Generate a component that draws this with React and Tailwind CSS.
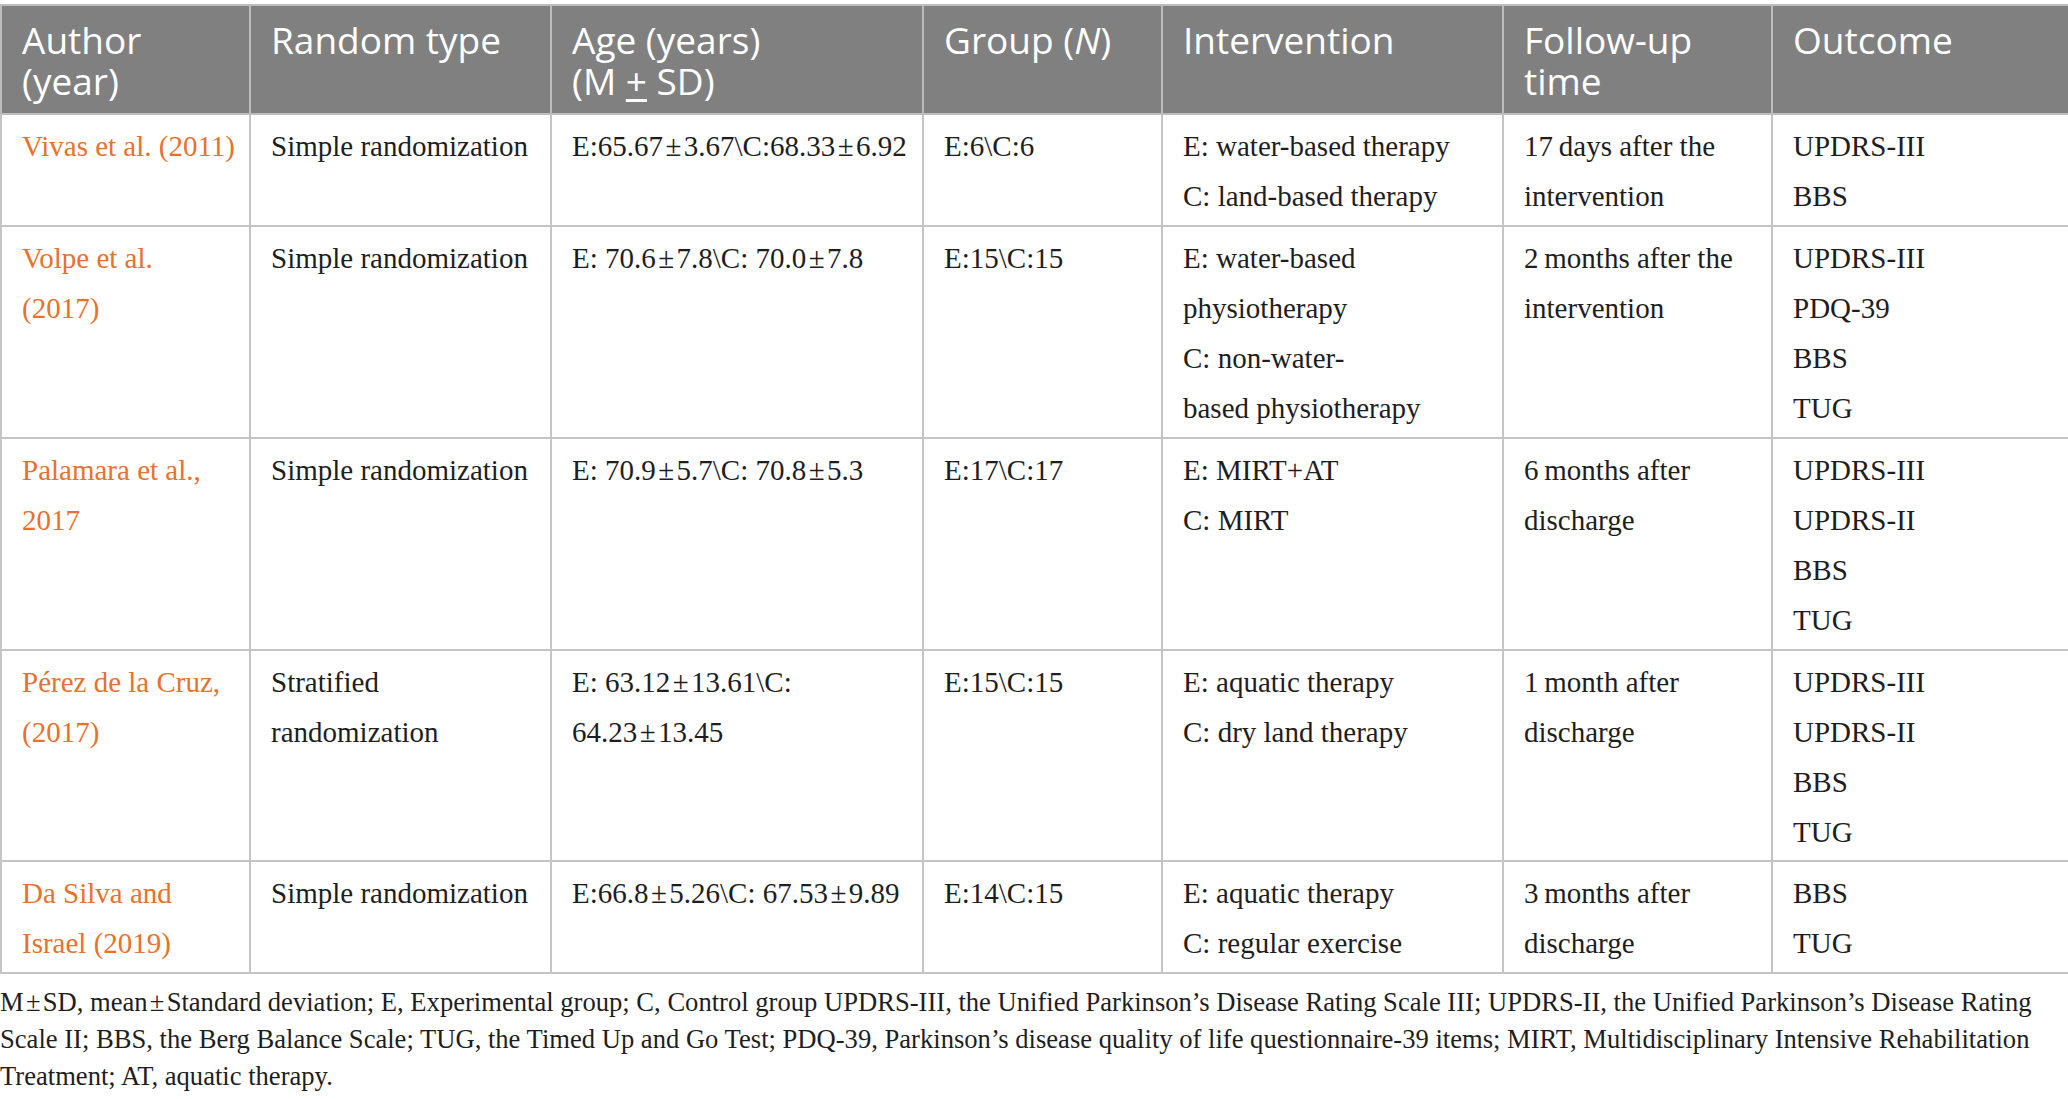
import React from 'react';

const cols = [249, 301, 372, 239, 341, 269, 297];

const pm = '\u200A±\u200A';

const rows = [
  {
    author: ['Vivas et al. (2011)'],
    type: ['Simple randomization'],
    age: [`E:65.67${pm}3.67\\C:68.33${pm}6.92`],
    group: ['E:6\\C:6'],
    intervention: ['E: water-based therapy', 'C: land-based therapy'],
    follow: ['17\u2009days after the', 'intervention'],
    outcome: ['UPDRS-III', 'BBS'],
    h: 'h-[112px]',
  },
  {
    author: ['Volpe et al.', '(2017)'],
    type: ['Simple randomization'],
    age: [`E: 70.6${pm}7.8\\C: 70.0${pm}7.8`],
    group: ['E:15\\C:15'],
    intervention: ['E: water-based', 'physiotherapy', 'C: non-water-', 'based physiotherapy'],
    follow: ['2\u2009months after the', 'intervention'],
    outcome: ['UPDRS-III', 'PDQ-39', 'BBS', 'TUG'],
    h: 'h-[212px]',
  },
  {
    author: ['Palamara et al.,', '2017'],
    type: ['Simple randomization'],
    age: [`E: 70.9${pm}5.7\\C: 70.8${pm}5.3`],
    group: ['E:17\\C:17'],
    intervention: ['E: MIRT+AT', 'C: MIRT'],
    follow: ['6\u2009months after', 'discharge'],
    outcome: ['UPDRS-III', 'UPDRS-II', 'BBS', 'TUG'],
    h: 'h-[212px]',
  },
  {
    author: ['Pérez de la Cruz,', '(2017)'],
    type: ['Stratified', 'randomization'],
    age: [`E: 63.12${pm}13.61\\C:`, `64.23${pm}13.45`],
    group: ['E:15\\C:15'],
    intervention: ['E: aquatic therapy', 'C: dry land therapy'],
    follow: ['1\u2009month after', 'discharge'],
    outcome: ['UPDRS-III', 'UPDRS-II', 'BBS', 'TUG'],
    h: 'h-[211px]',
  },
  {
    author: ['Da Silva and', 'Israel (2019)'],
    type: ['Simple randomization'],
    age: [`E:66.8${pm}5.26\\C: 67.53${pm}9.89`],
    group: ['E:14\\C:15'],
    intervention: ['E: aquatic therapy', 'C: regular exercise'],
    follow: ['3\u2009months after', 'discharge'],
    outcome: ['BBS', 'TUG'],
    h: 'h-[112px]',
  },
];

function Lines({ items }) {
  return items.map((t, i) => (
    <div key={i} className="whitespace-nowrap">{t}</div>
  ));
}

export default function App() {
  return (
    <div className="min-h-screen bg-white pt-[4px]">
      <table className="table-fixed border-collapse w-[2068px]">
        <colgroup>
          {cols.map((w, i) => (
            <col key={i} style={{ width: w }} />
          ))}
        </colgroup>
        <thead>
          <tr className="bg-[#808080] text-white h-[109px] font-['Open_Sans',sans-serif] text-[37px] leading-[41px]">
            <th className="border-2 border-[#bdbdbd] text-left align-top font-normal px-[20px] pt-[13px]">Author<br />(year)</th>
            <th className="border-2 border-[#bdbdbd] text-left align-top font-normal px-[20px] pt-[13px]">Random type</th>
            <th className="border-2 border-[#bdbdbd] text-left align-top font-normal px-[20px] pt-[13px]">
              Age (years)<br />(M <span className="underline underline-offset-4">+</span> SD)
            </th>
            <th className="border-2 border-[#bdbdbd] text-left align-top font-normal px-[20px] pt-[13px]">
              Group (<span className="italic">N</span>)
            </th>
            <th className="border-2 border-[#bdbdbd] text-left align-top font-normal px-[20px] pt-[13px]">Intervention</th>
            <th className="border-2 border-[#bdbdbd] text-left align-top font-normal px-[20px] pt-[13px]">Follow-up<br />time</th>
            <th className="border-2 border-[#bdbdbd] text-left align-top font-normal px-[20px] pt-[13px]">Outcome</th>
          </tr>
        </thead>
        <tbody className="font-['Liberation_Serif',serif] text-[29px] leading-[50px] text-[#1e1e1e]">
          {rows.map((r, i) => (
            <tr key={i} className={r.h}>
              <td className="border-2 border-[#c4c4c4] align-top px-[20px] pt-[6px] text-[#e8712c]"><Lines items={r.author} /></td>
              <td className="border-2 border-[#c4c4c4] align-top px-[20px] pt-[6px]"><Lines items={r.type} /></td>
              <td className="border-2 border-[#c4c4c4] align-top px-[20px] pt-[6px]"><Lines items={r.age} /></td>
              <td className="border-2 border-[#c4c4c4] align-top px-[20px] pt-[6px]"><Lines items={r.group} /></td>
              <td className="border-2 border-[#c4c4c4] align-top px-[20px] pt-[6px]"><Lines items={r.intervention} /></td>
              <td className="border-2 border-[#c4c4c4] align-top px-[20px] pt-[6px]"><Lines items={r.follow} /></td>
              <td className="border-2 border-[#c4c4c4] align-top px-[20px] pt-[6px]"><Lines items={r.outcome} /></td>
            </tr>
          ))}
        </tbody>
      </table>
      <div className="mt-[10px] font-['Liberation_Serif',serif] text-[26.6px] leading-[37px] text-[#1e1e1e]">
        <div className="whitespace-nowrap">M{pm}SD, mean{pm}Standard deviation; E, Experimental group; C, Control group UPDRS-III, the Unified Parkinson’s Disease Rating Scale III; UPDRS-II, the Unified Parkinson’s Disease Rating</div>
        <div className="whitespace-nowrap">Scale II; BBS, the Berg Balance Scale; TUG, the Timed Up and Go Test; PDQ-39, Parkinson’s disease quality of life questionnaire-39 items; MIRT, Multidisciplinary Intensive Rehabilitation</div>
        <div className="whitespace-nowrap">Treatment; AT, aquatic therapy.</div>
      </div>
    </div>
  );
}
